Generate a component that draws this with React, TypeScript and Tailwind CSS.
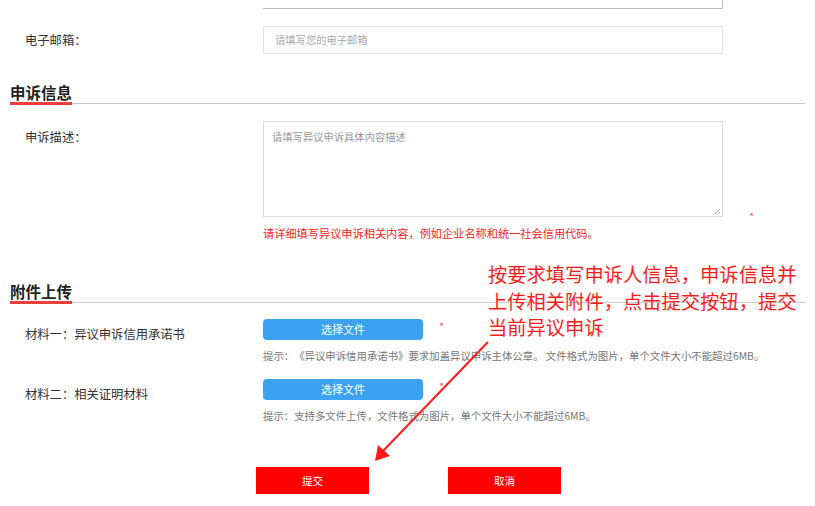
import React from 'react'

const font = { fontFamily: '"Noto Sans CJK SC", "Noto Sans", sans-serif' }

function SectionTitle({ title }: { title: string }) {
  return (
    <div className="mx-[10px] flex items-end border-b border-[#c9c9c9]">
      <span className="mb-[-2px] border-b-[3px] border-[#e8403d] text-[15.5px] font-bold leading-[20px] text-[#222]">
        {title}
      </span>
    </div>
  )
}

function UploadRow({ label, hint }: { label: string; hint: string }) {
  return (
    <div className="flex">
      <div className="w-[263px] pl-[25px] pt-[6px] text-[12.3px] leading-[18px] text-[#333]">{label}</div>
      <div>
        <div className="flex items-start">
          <button className="h-[21px] w-[160px] rounded-[4px] bg-[#3ba2f2] text-[11px] leading-[21px] text-white">
            选择文件
          </button>
          <span className="ml-[16px] text-[11px] leading-[14px] text-[#f06060]">*</span>
        </div>
        <div className="mt-[9px] text-[10.4px] leading-[14px] text-[#777]">{hint}</div>
      </div>
    </div>
  )
}

export default function App() {
  return (
    <div className="relative h-[506px] w-[815px] overflow-hidden bg-white [text-spacing-trim:space-all]" style={font}>
      {/* cut-off input above */}
      <div className="ml-[263px] h-[9px] w-[460px] border-b border-r border-[#bdbdbd]"></div>

      {/* email */}
      <div className="mt-[17px] flex items-center">
        <div className="w-[263px] pl-[25px] text-[12.3px] text-[#333]">电子邮箱：</div>
        <div className="flex h-[28px] w-[460px] items-center border border-[#e2e2e2] px-[11px] text-[10.3px] text-[#aaa]">
          请填写您的电子邮箱
        </div>
      </div>

      <div className="mt-[28px]">
        <SectionTitle title="申诉信息" />
      </div>

      {/* description */}
      <div className="mt-[17px] flex">
        <div className="w-[263px] pl-[25px] pt-[7px] text-[12.3px] leading-[18px] text-[#333]">申诉描述：</div>
        <div>
          <div className="flex items-end">
            <div className="relative h-[96px] w-[460px] border border-[#dcdcdc] px-[8px] pt-[7px] text-[10.3px] leading-[16px] text-[#999]">
              请填写异议申诉具体内容描述
              <svg className="absolute bottom-[1px] right-[1px]" width="7" height="7" viewBox="0 0 7 7">
                <path d="M6 1 L1 6 M6 4 L4 6" stroke="#999" strokeWidth="0.8" />
              </svg>
            </div>
            <span className="mb-[-6px] ml-[26px] text-[11px] leading-[14px] text-[#f06060]">*</span>
          </div>
          <div className="mt-[8px] text-[11.2px] leading-[16px] text-[#ff1a1a]">
            请详细填写异议申诉相关内容，例如企业名称和统一社会信用代码。
          </div>
        </div>
      </div>

      <div className="mt-[40px]">
        <SectionTitle title="附件上传" />
      </div>

      <div className="mt-[16px] flex flex-col gap-[16px]">
        <UploadRow
          label="材料一：异议申诉信用承诺书"
          hint="提示：《异议申诉信用承诺书》要求加盖异议申诉主体公章。 文件格式为图片，单个文件大小不能超过6MB。"
        />
        <UploadRow label="材料二：相关证明材料" hint="提示：支持多文件上传，文件格式为图片，单个文件大小不能超过6MB。" />
      </div>

      {/* actions */}
      <div className="mt-[44px] flex pl-[256px]">
        <button className="h-[27px] w-[113px] bg-[#ff0000] text-[10.5px] text-white">提交</button>
        <button className="ml-[79px] h-[27px] w-[113px] bg-[#ff0000] text-[10.5px] text-white">取消</button>
      </div>

      {/* annotation overlay */}
      <div className="absolute left-[488px] top-[261px] w-[320px] text-[19.3px] leading-[26.5px] text-[#ff1a1a]">
        按要求填写申诉人信息，申诉信息并
        <br />
        上传相关附件，点击提交按钮，提交
        <br />
        当前异议申诉
      </div>
      <svg className="pointer-events-none absolute left-0 top-0" width="815" height="506">
        <line x1="488" y1="342" x2="382" y2="452" stroke="#ff1a1a" strokeWidth="2" />
        <polygon points="375,461 378,445 390,456" fill="#ff1a1a" />
      </svg>
    </div>
  )
}
